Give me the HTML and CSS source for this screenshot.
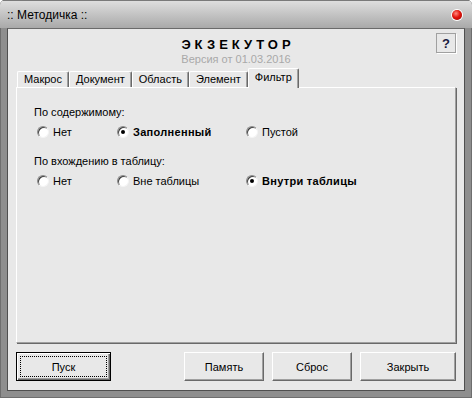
FILE: index.html
```html
<!DOCTYPE html>
<html lang="ru">
<head>
    <meta charset="UTF-8">
    <meta name="viewport" content="width=device-width, initial-scale=1.0">
    <title>Методичка</title>
    <link rel="stylesheet" href="styles.css">
</head>
<body>
    <div class="window">
        <div class="titlebar">
            <span class="caption">:: Методичка ::</span>
            <span class="close-dot"></span>
        </div>
        <div class="client">
            <div class="header">
                <div></div>
                <div class="brand">
                    <div class="brand-name">ЭКЗЕКУТОР</div>
                    <div class="brand-version">Версия от 01.03.2016</div>
                </div>
                <button class="help-btn" type="button">?</button>
            </div>

            <div class="tabs">
                <div class="tab">Макрос</div>
                <div class="tab">Документ</div>
                <div class="tab">Область</div>
                <div class="tab">Элемент</div>
                <div class="tab active">Фильтр</div>
            </div>

            <div class="tab-panel">
                <div class="group-label">По содержимому:</div>
                <div class="radio-row">
                    <label class="radio-item"><span class="radio"></span>Нет</label>
                    <label class="radio-item checked"><span class="radio"></span>Заполненный</label>
                    <label class="radio-item"><span class="radio"></span>Пустой</label>
                </div>

                <div class="group-label second">По вхождению в таблицу:</div>
                <div class="radio-row">
                    <label class="radio-item"><span class="radio"></span>Нет</label>
                    <label class="radio-item"><span class="radio"></span>Вне таблицы</label>
                    <label class="radio-item checked"><span class="radio"></span>Внутри таблицы</label>
                </div>
            </div>

            <div class="actions">
                <button class="btn btn-default" type="button"><span class="focus">Пуск</span></button>
                <button class="btn" type="button">Память</button>
                <button class="btn" type="button">Сброс</button>
                <button class="btn btn-wide" type="button">Закрыть</button>
            </div>
        </div>
    </div>
</body>
</html>
```

FILE: styles.css
```css
body {
    margin: 0;
    background: #fff;
    font-family: "Liberation Sans", Arial, sans-serif;
    font-size: 11px;
    color: #000;
}
.window {
    width: 472px;
    height: 398px;
    box-sizing: border-box;
    display: flex;
    flex-direction: column;
    background: #8e8e8e;
    border-radius: 5px 5px 0 0;
    box-shadow: inset 0 0 0 1px #6e6e6e;
    overflow: hidden;
}
.titlebar {
    height: 28px;
    flex-shrink: 0;
    display: flex;
    align-items: center;
    justify-content: space-between;
    padding: 0 10px 0 7px;
    background: linear-gradient(#dedede, #a9a9a9);
    border-top: 1px solid #7a7a7a;
    box-sizing: border-box;
}
.caption {
    font-size: 12px;
    padding-top: 1px;
}
.close-dot {
    width: 10px;
    height: 10px;
    border-radius: 50%;
    background: radial-gradient(circle at 40% 35%, #ff8a80, #e3140c 45%, #9c0000);
    box-shadow: 0 0 0 1px #fff;
}
.client {
    flex: 1;
    margin: 0 7px 7px;
    display: flex;
    flex-direction: column;
    padding: 0 8px 9px;
    background: #e8e8e8;
    border: 1px solid #4f4f4f;
    border-top-color: #6a6a6a;
}
.header {
    display: grid;
    grid-template-columns: 1fr auto 1fr;
    padding-top: 4px;
}
.brand {
    padding-top: 4px;
    text-align: center;
}
.brand-name {
    font-size: 13px;
    font-weight: bold;
    line-height: 16px;
    letter-spacing: 4px;
    padding-left: 4px;
}
.brand-version {
    line-height: 13px;
    color: #a8a8a8;
}
.help-btn {
    justify-self: end;
    align-self: start;
    width: 20px;
    height: 20px;
    padding: 0;
    margin: 0;
    background: #e8e8e8;
    border: 1px solid #a0a0a0;
    box-shadow: 1px 1px 0 #fff;
    font-family: "Liberation Sans", Arial, sans-serif;
    font-size: 13px;
    font-weight: bold;
    color: #1a1a40;
}
.tabs {
    display: flex;
    align-items: flex-end;
    height: 20px;
    margin-top: 2px;
    padding-left: 1px;
}
.tab {
    height: 17px;
    box-sizing: border-box;
    padding: 0 6px 0 6px;
    line-height: 15px;
    border-top: 1px solid #fff;
    border-left: 1px solid #fff;
    border-right: 1px solid #696969;
    box-shadow: inset -1px 0 0 #a0a0a0;
    border-radius: 2px 2px 0 0;
    background: #e8e8e8;
}
.tab.active {
    height: 20px;
    line-height: 17px;
    position: relative;
    z-index: 1;
}
.tab-panel {
    flex: 1;
    margin-top: -1px;
    padding: 14px 0 0 17px;
    border-top: 1px solid #fff;
    border-left: 1px solid #fff;
    border-right: 1px solid #a0a0a0;
    border-bottom: 1px solid #a0a0a0;
    box-shadow: 1px 1px 0 #696969;
}
.group-label {
    line-height: 20px;
}
.group-label.second {
    margin-top: 9px;
}
.radio-row {
    display: grid;
    grid-template-columns: 80px 129px auto;
    height: 20px;
    margin-left: 3px;
}
.radio-item {
    display: flex;
    align-items: center;
    gap: 4px;
}
.radio-item.checked {
    font-weight: bold;
    letter-spacing: 0.3px;
}
.radio {
    width: 12px;
    height: 12px;
    box-sizing: border-box;
    display: flex;
    align-items: center;
    justify-content: center;
    border-radius: 50%;
    background: #fff;
    border: 1px solid;
    border-color: #8a8a8a #f4f4f4 #f4f4f4 #8a8a8a;
    box-shadow: inset 1px 1px 0 #404040;
}
.radio-item.checked .radio::after {
    content: "";
    width: 4px;
    height: 4px;
    border-radius: 50%;
    background: #000;
}
.actions {
    display: flex;
    gap: 8px;
    margin-top: 9px;
}
.btn {
    width: 80px;
    height: 29px;
    padding: 0;
    margin: 0;
    background: #e8e8e8;
    border: 1px solid;
    border-color: #fff #696969 #696969 #fff;
    box-shadow: inset -1px -1px 0 #a0a0a0;
    font-family: "Liberation Sans", Arial, sans-serif;
    font-size: 11px;
    color: #000;
}
.btn-wide {
    width: 96px;
}
.btn-default {
    width: 95px;
    margin-right: auto;
    padding: 3px;
    border: 1px solid #000;
    box-shadow: inset 1px 1px 0 #fff, inset -1px -1px 0 #696969, inset -2px -2px 0 #a0a0a0;
}
.btn-default .focus {
    display: flex;
    align-items: center;
    justify-content: center;
    height: 100%;
    border: 1px dotted #000;
    box-sizing: border-box;
}
```
